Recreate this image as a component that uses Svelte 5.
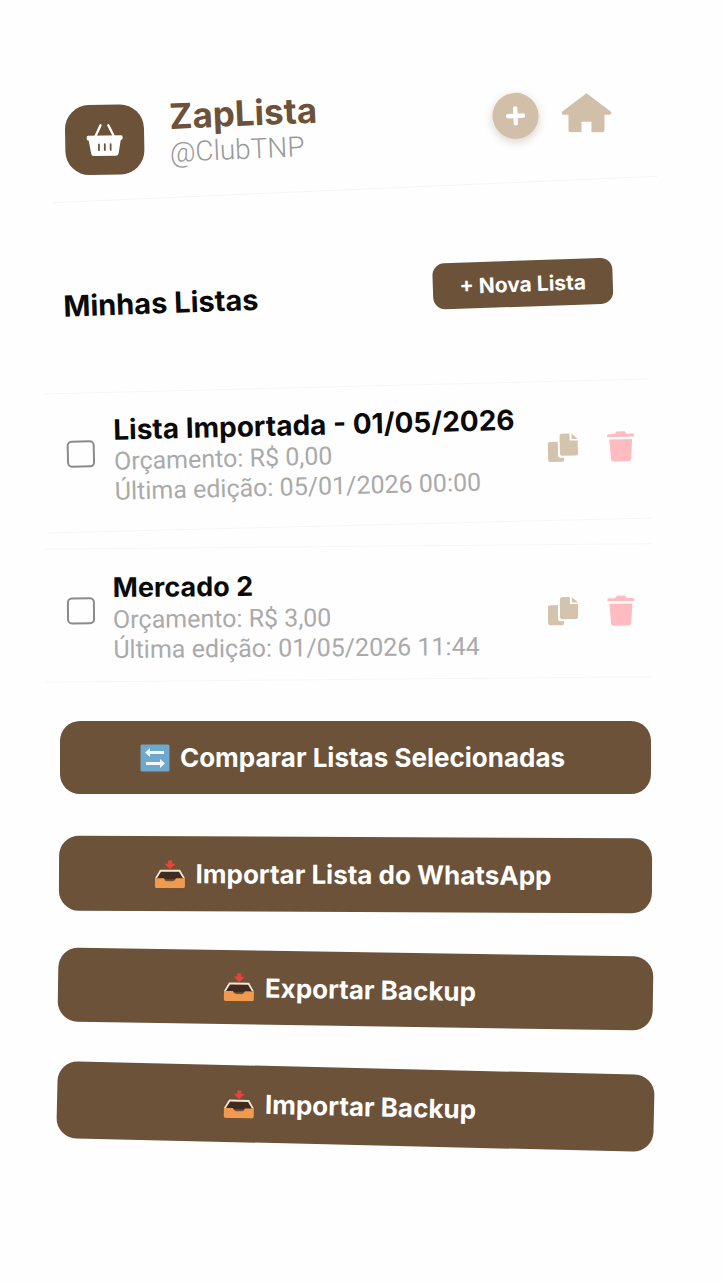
<script>
	const lists = [
		{ id: 1, cls: 'first', name: 'Lista Importada - 01/05/2026', budget: 'R$ 0,00', edited: '05/01/2026 00:00' },
		{ id: 2, cls: 'second', name: 'Mercado 2', budget: 'R$ 3,00', edited: '01/05/2026 11:44' }
	];
	const actions = [
		{ label: 'Comparar Listas Selecionadas', icon: 'swap', cls: 'b1' },
		{ label: 'Importar Lista do WhatsApp', icon: 'tray', cls: 'b2' },
		{ label: 'Exportar Backup', icon: 'tray', cls: 'b3' },
		{ label: 'Importar Backup', icon: 'tray', cls: 'b4' }
	];
</script>

<div class="page">
	<header class="top">
		<div class="logo">
			<svg viewBox="0 0 40 36" width="39" height="35" aria-hidden="true">
				<path d="M10 15 L16 2.500 M30 15 L24 2.500" stroke="#fff" stroke-width="2.4" stroke-linecap="round" fill="none" />
				<path d="M3 13 H37 Q38.500 13 38.500 15 V16 Q38.500 18 36.500 18 L34 32 Q33.500 34 31 34 H9 Q6.500 34 6 32 L3.500 18 Q1.500 18 1.500 16 V15 Q1.500 13 3 13 Z" fill="#fff" />
				<path d="M14 22 V28 M20 22 V28 M26 22 V28" stroke="#6b5239" stroke-width="1.800" stroke-linecap="round" />
			</svg>
		</div>
		<div class="brand">
			<h1>ZapLista</h1>
			<p>@ClubTNP</p>
		</div>
		<div class="top-actions">
			<span class="plus">
				<svg viewBox="0 0 20 20" width="20" height="20" aria-hidden="true">
					<path d="M10 2.500 V17.500 M2.500 10 H17.500" stroke="#fff" stroke-width="4.400" stroke-linecap="round" />
				</svg>
			</span>
			<svg class="home" viewBox="0 0 52 40" width="52" height="40" aria-hidden="true">
				<path d="M1.500 19 L26 0.500 L50.500 19 Q51.500 21.500 49 22 H44 V37 Q44 39.500 41.500 39.500 H31 V29 H21 V39.500 H10.500 Q8 39.500 8 37 V22 H3 Q0.500 21.500 1.500 19 Z" fill="#d1bfa9" />
			</svg>
		</div>
	</header>

	<section class="title-row">
		<h2>Minhas Listas</h2>
		<button class="new">+ Nova Lista</button>
	</section>

	{#each lists as list (list.id)}
		<article class="row {list.cls}">
			<span class="check"></span>
			<div class="info">
				<h3>{list.name}</h3>
				<p>Orçamento: {list.budget}</p>
				<p>Última edição: {list.edited}</p>
			</div>
			<div class="row-icons">
				<svg viewBox="0 0 32 30" width="32" height="30" aria-hidden="true">
					<path d="M1 11 Q1 9 3 9 H11 V23 Q11 25 13 25 H17 V27 Q17 29 15 29 H3 Q1 29 1 27 Z" fill="#d4c3ad" />
					<path d="M13 3 Q13 1 15 1 H23 V8 H31 V21 Q31 23 29 23 H15 Q13 23 13 21 Z" fill="#d4c3ad" />
					<path d="M25 1 L31 6.500 H25 Z" fill="#d4c3ad" />
				</svg>
				<svg viewBox="0 0 28 32" width="28" height="32" aria-hidden="true">
					<path d="M10 1 H18 L20 3.500 H26 Q27.500 3.500 27.500 5 V6.500 H0.500 V5 Q0.500 3.500 2 3.500 H8 Z" fill="#ffbcc0" />
					<path d="M2.500 9 H25.500 L24 29 Q23.800 31 21.500 31 H6.500 Q4.200 31 4 29 Z" fill="#ffbcc0" />
				</svg>
			</div>
		</article>
	{/each}

	<div class="actions">
		{#each actions as action (action.label)}
			<button class="wide {action.cls}">
				{#if action.icon === 'swap'}
					<svg viewBox="0 0 30 28" width="30" height="28" aria-hidden="true">
						<rect x="0.500" y="0.500" width="29" height="27" rx="1.500" fill="#6fa8cc" />
						<path d="M10 4 L5 8.500 L10 13 V10 H24 V7 H10 Z" fill="#f2f6f8" />
						<path d="M20 15 L25 19.500 L20 24 V21 H6 V18 H20 Z" fill="#f2f6f8" />
					</svg>
				{:else}
					<svg viewBox="0 0 32 28" width="32" height="28" aria-hidden="true">
						<path d="M14 0 H18 V3.500 H21.500 L16 9 L10.500 3.500 H14 Z" fill="#e8443a" />
						<path d="M7 11 H25 L30 19 H2 Z" fill="#3f2a1f" />
						<path d="M6 9.500 H26 L31 18 H29 L25 11.500 H7 L3 18 H1 Z" fill="#f3e6d4" />
						<path d="M1 18 H10 Q11 21 13 21 H19 Q21 21 22 18 H31 V26 Q31 28 29 28 H3 Q1 28 1 26 Z" fill="#ef9a4e" />
					</svg>
				{/if}
				<span>{action.label}</span>
			</button>
		{/each}
	</div>
</div>

<style>
	:global(body) {
		background: #fefefe;
	}

	.page {
		width: 724px;
		height: 1283px;
		overflow: hidden;
		box-sizing: border-box;
		padding-top: 70px;
		font-family: Inter, Roboto, "Liberation Sans", sans-serif;
	}

	h1, h2, h3, p {
		margin: 0;
	}

	button {
		border: none;
		font-family: inherit;
		color: #fff;
		background: #6b5239;
	}

	/* header */
	.top {
		display: flex;
		align-items: center;
		box-sizing: border-box;
		width: 605px;
		height: 120px;
		margin-left: 50px;
		padding: 0 42px 0 15px;
		border-bottom: 1px solid #f4f4f4;
		transform: rotate(-2.5deg);
	}

	.logo {
		display: flex;
		align-items: center;
		justify-content: center;
		width: 79px;
		height: 70px;
		margin-bottom: 2px;
		border-radius: 24px;
		background: #6b5239;
		transform: rotate(1.500deg);
	}

	.brand {
		margin: 0 0 10px 26px;
	}

	.brand h1 {
		font-size: 35px;
		line-height: 40px;
		font-weight: 700;
		color: #6b5239;
	}

	.brand p {
		font-family: Roboto, sans-serif;
		font-size: 28px;
		line-height: 33px;
		font-weight: 300;
		color: #999999;
		margin-left: -1px;
	}

	.top-actions {
		display: flex;
		align-items: center;
		gap: 22px;
		margin: 0 0 13px auto;
	}

	.home {
		transform: rotate(2.500deg);
	}

	.plus {
		display: flex;
		align-items: center;
		justify-content: center;
		width: 46px;
		height: 46px;
		border-radius: 50%;
		background: #d1bfa9;
		box-shadow: 0 3px 8px rgba(107, 82, 57, 0.25);
	}

	/* list title */
	.title-row {
		display: flex;
		align-items: center;
		justify-content: space-between;
		box-sizing: border-box;
		width: 586px;
		height: 110px;
		margin: 48px 0 0 47px;
		padding: 0 20px 0 16px;
		transform: rotate(-2deg);
	}

	.title-row h2 {
		font-size: 29px;
		font-weight: 700;
		color: #0a0a0a;
		margin-top: 6px;
	}

	.new {
		width: 180px;
		height: 46px;
		border-radius: 12px;
		font-size: 21px;
		font-weight: 700;
		margin-bottom: 6px;
	}

	/* list rows */
	.row {
		display: flex;
		align-items: center;
		box-sizing: border-box;
		width: 606px;
		margin-left: 45px;
		padding: 0 16px 0 22px;
		border-top: 1px solid #f6f6f6;
		border-bottom: 1px solid #f6f6f6;
	}

	.row.first {
		height: 140px;
		margin-top: 38px;
		transform: rotate(-1.400deg);
	}

	.row.second {
		height: 134px;
		margin-top: 20px;
		transform: rotate(-0.500deg);
	}

	.check {
		flex: none;
		width: 24px;
		height: 23px;
		border: 2px solid #8a8a8a;
		border-radius: 5px;
	}

	.first .check {
		margin-bottom: 18px;
	}

	.second .check {
		margin-bottom: 10px;
	}

	.first .info {
		margin-bottom: 4px;
	}

	.second .info {
		margin: 6px 0 0 18px;
	}

	.first .row-icons {
		margin-bottom: 6px;
	}

	.info {
		margin-left: 19px;
	}

	.info h3 {
		font-size: 28px;
		line-height: 34px;
		font-weight: 700;
		color: #0a0a0a;
	}

	.second h3 {
		font-size: 27px;
	}

	.info p {
		font-family: Roboto, sans-serif;
		font-size: 25px;
		line-height: 30px;
		color: #aaaaaa;
	}

	.row-icons {
		display: flex;
		align-items: center;
		gap: 28px;
		margin-left: auto;
	}

	/* bottom actions */
	.actions {
		display: flex;
		flex-direction: column;
		align-items: center;
		width: 711px;
		margin-top: 41px;
	}

	.wide {
		display: flex;
		align-items: center;
		justify-content: center;
		gap: 10px;
		padding: 0 6px 0 0;
		font-size: 26px;
		font-weight: 700;
		border-radius: 20px;
	}

	.b1 {
		width: 591px;
		height: 73px;
	}

	.b2 {
		width: 593px;
		height: 75px;
		margin-top: 43px;
		transform: rotate(0.25deg);
	}

	.b3 {
		width: 595px;
		height: 74px;
		margin-top: 40px;
		padding-right: 12px;
		transform: rotate(0.9deg);
	}

	.b4 {
		width: 597px;
		height: 77px;
		margin-top: 42px;
		padding-right: 12px;
		transform: rotate(1.350deg);
	}
</style>
